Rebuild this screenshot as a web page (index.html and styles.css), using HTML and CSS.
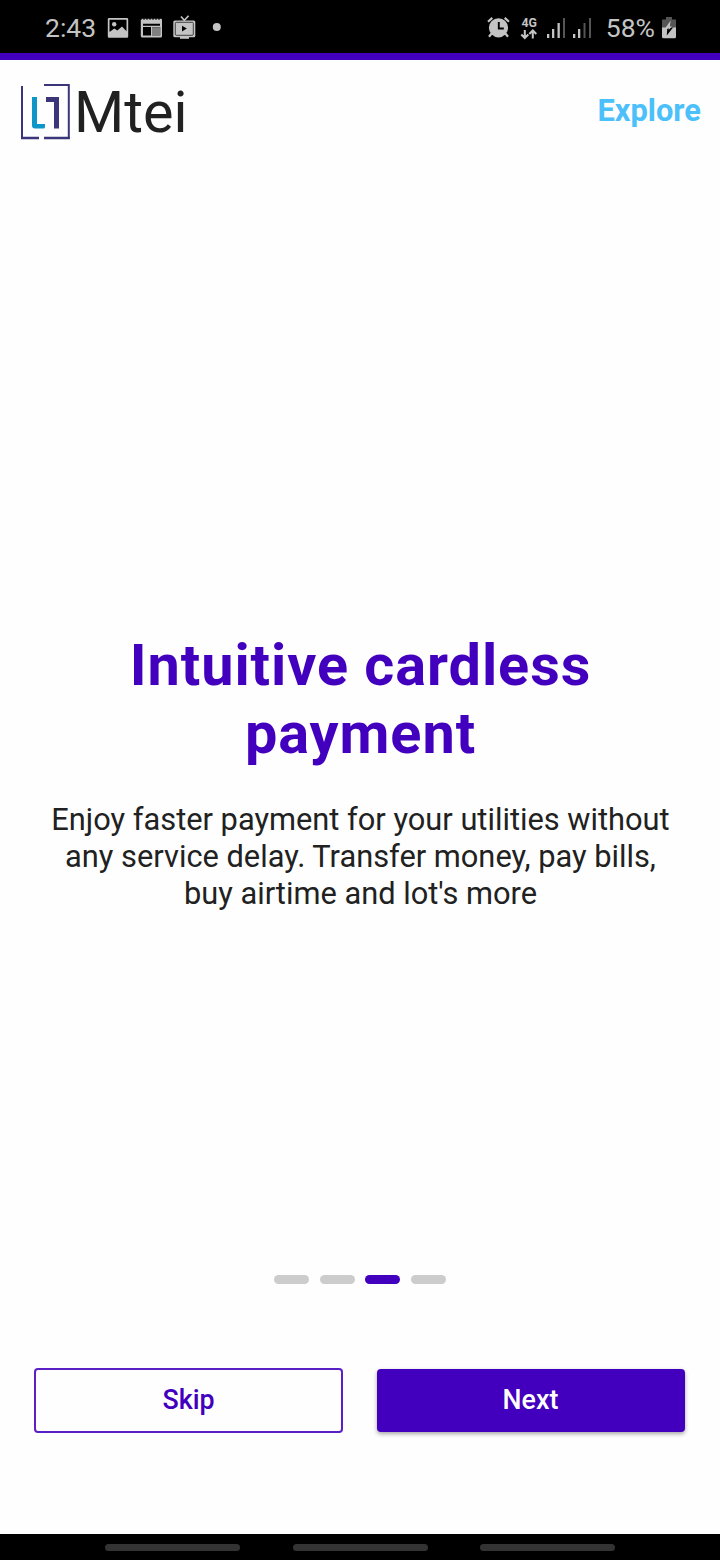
FILE: index.html
```
<!DOCTYPE html>
<html lang="en">
<head>
<meta charset="utf-8">
<title>Mtei</title>
<link rel="stylesheet" href="styles.css">
</head>
<body>
<div class="screen">
  <div class="status">
    <span class="clock">2:43</span>
    <svg class="tray" width="116" height="53" viewBox="0 0 116 53" fill="#c4c4c4">
      <path fill-rule="evenodd" d="M2 18h18q1.200 0 1.200 1.200v17.300q0 1.200-1.200 1.200H2Q.8 37.700.8 36.500V19.200Q.8 18 2 18ZM2.500 19.800V32l4.800-3.600 3 2.200L15 26.500l4.500 4.800V19.800Z"/>
      <circle cx="7.200" cy="24.300" r="2.200"/>
      <path fill-rule="evenodd" d="M33.800 20q0-1.300 1.200-1.300h19q1 0 1 1.300v16q0 1.600-1.500 1.600h-18q-1.700 0-1.700-1.600ZM36 23.800v2h17v-2ZM36 27v8.500h8V27Zm9 0v8.500h8.300V27Z"/>
      <path d="M45 27.200h8.300v8.300H45Z" opacity=".65"/>
      <path d="M34 18v2M37 18v2M40 18v2M43 18v2M46 18v2M49 18v2M52 18v2" stroke="#000" stroke-width="1"/>
      <rect x="66.300" y="20.400" width="22" height="16.800" rx="1.500"/>
      <path d="m74 16.500 3.300 3.800 4.300-4.500" fill="none" stroke="#c4c4c4" stroke-width="1.600"/>
      <rect x="68.300" y="22.300" width="18" height="13" rx="1" fill="none" stroke="#222" stroke-width=".8"/>
      <path d="M75 25.800v5.600l4.800-2.800Z" fill="#000"/>
      <path d="M73 37h9v1.800h-9Z"/>
      <circle cx="109.800" cy="27" r="4"/>
    </svg>
    <svg class="signals" width="108" height="53" viewBox="0 0 108 53" fill="#c4c4c4">
      <circle cx="11.500" cy="27.800" r="9.600"/>
      <path d="m1 21.800 4.300-3.900M22 21.800l-4.300-3.900" fill="none" stroke="#c4c4c4" stroke-width="2.200"/>
      <path d="m5 33-3 3.800M18 33l3 3.800" fill="none" stroke="#c4c4c4" stroke-width="2.200"/>
      <path d="M11.800 22v6.500h5" fill="none" stroke="#000" stroke-width="1.900"/>
      <text class="net" x="34.500" y="27" textLength="15.500" lengthAdjust="spacingAndGlyphs">4G</text>
      <path d="M37.800 30v8m-3.500-3.500 3.500 3.500 3.500-3.500M45.800 38.500v-8m-3.500 3.500 3.500-3.500 3.500 3.500" fill="none" stroke="#c4c4c4" stroke-width="2"/>
      <path d="M60 34h2.300v4H60Zm5-5h2.300v9H65Zm5.500-6h2.300v15h-2.300ZM86 34h2.300v4H86Zm5-5h2.300v9H91Z"/>
      <path d="M76 18h2v20h-2ZM96.500 23h2v15h-2Zm5.500-5h2v20h-2Z" fill="#555"/>
    </svg>
    <span class="percent">58%</span>
    <svg class="battery" width="14" height="53" viewBox="0 0 14 53">
      <path d="M4 17h6v2.500h4V28H0v-8.500h4Z" fill="#555"/>
      <path d="M0 27.500h14v9.200q0 1.500-1.500 1.500h-11Q0 38.200 0 36.700Z" fill="#c4c4c4"/>
      <path d="M5.200 29 4.800 35.500 11 27.500H7Z" fill="#000"/>
      <path d="M8.700 20.500 3 28.500h4l-.5 1.500 3.700-3.500H7.800Z" fill="#c4c4c4"/>
    </svg>
  </div>
  <div class="band"></div>
  <header class="header">
    <svg class="logo" width="50" height="58" viewBox="0 0 50 58" fill="none" stroke="#3b3579" stroke-width="2">
      <path d="M2 3v53M24 2h24.800v54"/>
      <path d="M1 55h18M24 55h25.800" stroke-width="2.500"/>
      <path d="M12 14h5v27h8v3q0 1.500-1.500 1.500H15q-3 0-3-3Z" fill="#0e96c8" stroke="none"/>
      <path d="M26 14h13v31.500h-5V19h-8Z" fill="#3b3579" stroke="none"/>
    </svg>
    <span class="brand">Mtei</span>
    <a class="explore">Explore</a>
  </header>
  <main class="content">
    <h1 class="title">Intuitive cardless<br>payment</h1>
    <p class="lead">Enjoy faster payment for your utilities without<br>any service delay. Transfer money, pay bills,<br>buy airtime and lot's more</p>
  </main>
  <div class="pager"><i class="dash"></i><i class="dash"></i><i class="dash active"></i><i class="dash"></i></div>
  <div class="actions">
    <button class="btn skip">Skip</button>
    <button class="btn next">Next</button>
  </div>
  <div class="navbar"><i class="pill"></i><i class="pill"></i><i class="pill"></i></div>
</div>
</body>
</html>
```
FILE: styles.css
```
* { box-sizing: border-box; }
body { margin: 0; font-family: Roboto, sans-serif; background: #fefefe; }
.screen { width: 720px; height: 1560px; display: flex; flex-direction: column; color: #212121; overflow: hidden; }
.status { height: 53px; flex: none; background: #000; color: #c4c4c4; display: flex; align-items: center; padding: 0 44px 0 45px; font-size: 26.500px; line-height: 53px; }
.clock { width: 62px; padding-top: 1px; }
.signals { margin-left: auto; }
.percent { margin: 1px 7px 0 11px; }
.net { font: 700 13.500px Roboto, sans-serif; }
.band { height: 7px; flex: none; background: #4200be; }
.header { height: 103px; flex: none; display: flex; align-items: center; padding: 0 19px 0 20px; }
.logo { flex: none; }
.brand { font-size: 57.500px; line-height: 68px; margin-left: 4px; padding-top: 2px; }
.explore { margin-left: auto; font-size: 30.800px; font-weight: 700; line-height: 36px; color: #4bc0fb; padding-bottom: 2px; }
.content { height: 1112px; flex: none; padding: 469px 0 0 1px; text-align: center; }
.title { margin: 0; font-size: 57.600px; line-height: 68px; font-weight: 700; letter-spacing: .95px; color: #4200be; }
.lead { margin: 33px 0 0; font-size: 30.800px; line-height: 37px; }
.pager { flex: none; display: flex; justify-content: center; gap: 10.500px; height: 9px; }
.dash { width: 35px; height: 9px; border-radius: 4.500px; background: #ccc; }
.active { background: #4200be; }
.actions { flex: none; display: flex; justify-content: space-between; align-items: center; margin-top: 84px; height: 65px; padding: 0 35px 0 34px; }
.btn { font: 500 26.800px/1 Roboto, sans-serif; border-radius: 4px; padding: 0; }
.skip { width: 309.300px; height: 65px; background: none; border: 2px solid #5a20c6; color: #4200be; }
.next { width: 308px; height: 63px; background: #4200be; border: 0; color: #fff; padding-right: 1px; box-shadow: 0 2px 4px rgba(0,0,0,.35); }
.navbar { margin-top: auto; height: 26px; flex: none; background: #000; display: flex; justify-content: center; align-items: center; gap: 52.500px; }
.pill { width: 135px; height: 7px; border-radius: 4px; background: #333; }
```
